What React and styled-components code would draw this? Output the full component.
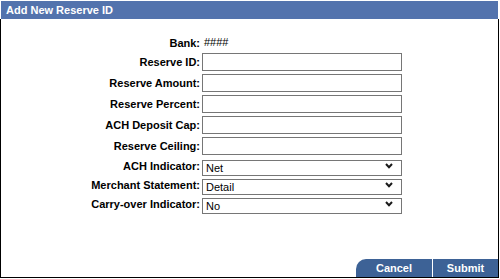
import React from "react";
import styled, { createGlobalStyle } from "styled-components";

const Global = createGlobalStyle`
  html, body { margin: 0; padding: 0; background: #fff; }
  body { font-family: "Liberation Sans", Arial, sans-serif; }
`;

const Wrapper = styled.div`
  width: 499px;
  height: 278px;
  box-sizing: border-box;
  padding-top: 1px;
  display: flex;
  flex-direction: column;
`;

const TitleBar = styled.div`
  margin: 0 1px;
  height: 18px;
  line-height: 18px;
  padding-left: 5px;
  background: #5373ad;
  color: #fff;
  font-size: 11px;
  font-weight: bold;
`;

const Body = styled.div`
  flex: 1;
  border: 1px solid #000;
  border-top: none;
  display: flex;
  flex-direction: column;
  padding-top: 16px;
`;

const Form = styled.div`
  display: grid;
  grid-template-columns: 199px 200px;
  column-gap: 2px;
  row-gap: 3px;
  align-items: center;
`;

const Label = styled.label`
  text-align: right;
  font-size: 11px;
  font-weight: bold;
  color: #000;
  white-space: nowrap;
`;

const Value = styled.div`
  height: 15px;
  line-height: 15px;
  padding-left: 2px;
  font-size: 11px;
  color: #000;
`;

const TextInput = styled.input`
  width: 200px;
  height: 18px;
  box-sizing: border-box;
  border: 1px solid #767676;
  margin: 0;
  padding: 0 3px;
  font-family: "Liberation Sans", Arial, sans-serif;
  font-size: 11px;
  background: #fff;
  outline: none;
`;

const SelectWrap = styled.div`
  position: relative;
  width: 200px;
  height: 16px;
`;

const Select = styled.select`
  appearance: none;
  -webkit-appearance: none;
  width: 200px;
  height: 16px;
  box-sizing: border-box;
  border: 1px solid #767676;
  border-radius: 0;
  margin: 0;
  padding: 0 0 0 3px;
  font-family: "Liberation Sans", Arial, sans-serif;
  font-size: 11px;
  line-height: 14px;
  color: #000;
  background: #fff;
  outline: none;
`;

const Chevron = styled.svg`
  position: absolute;
  right: 9px;
  top: 5px;
  pointer-events: none;
`;

const Footer = styled.div`
  margin-top: auto;
  display: flex;
  justify-content: flex-end;
  gap: 1px;
`;

const Button = styled.button`
  width: ${(p) => p.$w}px;
  height: 18px;
  border: none;
  margin: 0;
  padding: 0;
  background: #3d6296;
  color: #fff;
  font-family: "Liberation Sans", Arial, sans-serif;
  font-size: 11px;
  font-weight: bold;
  border-top-left-radius: ${(p) => (p.$rounded ? "10px" : "0")};
  cursor: pointer;
`;

const textFields = [
  "Reserve ID:",
  "Reserve Amount:",
  "Reserve Percent:",
  "ACH Deposit Cap:",
  "Reserve Ceiling:",
];

const selectFields = [
  { label: "ACH Indicator:", value: "Net", options: ["Net", "Gross"] },
  { label: "Merchant Statement:", value: "Detail", options: ["Detail", "Summary"] },
  { label: "Carry-over Indicator:", value: "No", options: ["No", "Yes"] },
];

function Dropdown({ value, options }) {
  return (
    <SelectWrap>
      <Select defaultValue={value}>
        {options.map((o) => (
          <option key={o}>{o}</option>
        ))}
      </Select>
      <Chevron width="8" height="6" viewBox="0 0 8 6">
        <polyline points="1,1 4,4.2 7,1" fill="none" stroke="#1a1a1a" strokeWidth="2" />
      </Chevron>
    </SelectWrap>
  );
}

export default function App() {
  return (
    <>
      <Global />
      <Wrapper>
        <TitleBar>Add New Reserve ID</TitleBar>
        <Body>
          <Form>
            <Label>Bank:</Label>
            <Value>####</Value>
            {textFields.map((f) => (
              <React.Fragment key={f}>
                <Label>{f}</Label>
                <TextInput type="text" />
              </React.Fragment>
            ))}
            {selectFields.map((f) => (
              <React.Fragment key={f.label}>
                <Label>{f.label}</Label>
                <Dropdown value={f.value} options={f.options} />
              </React.Fragment>
            ))}
          </Form>
          <Footer>
            <Button $w={76} $rounded>Cancel</Button>
            <Button $w={65}>Submit</Button>
          </Footer>
        </Body>
      </Wrapper>
    </>
  );
}
